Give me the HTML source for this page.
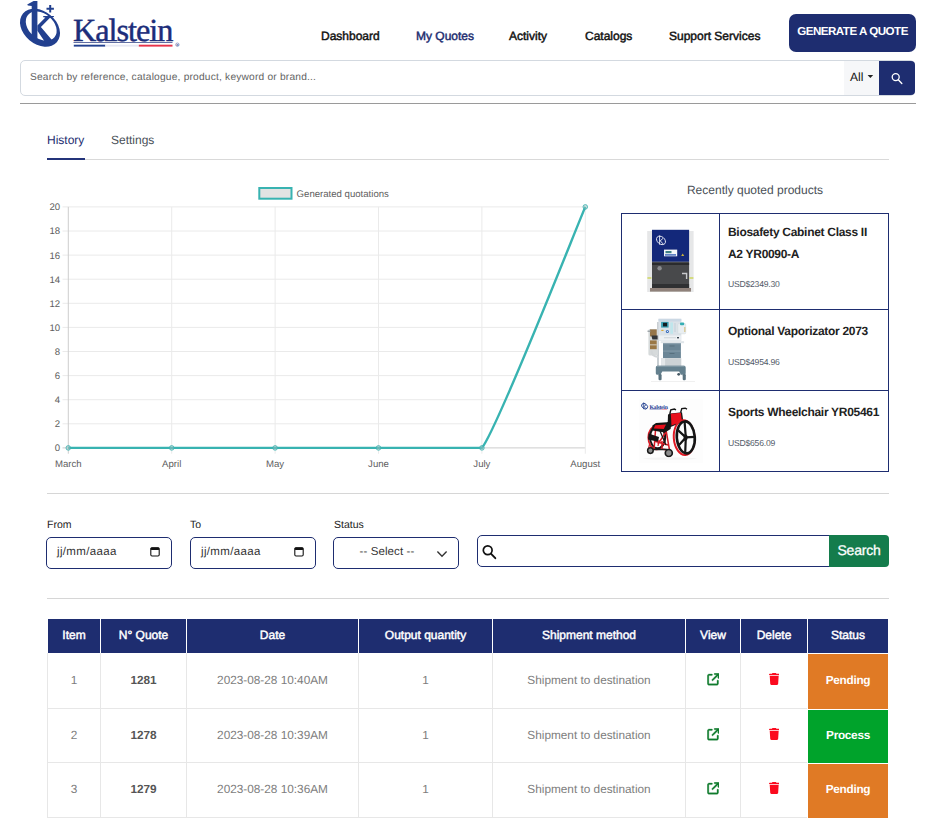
<!DOCTYPE html>
<html lang="en">
<head>
<meta charset="utf-8">
<title>Kalstein - My Quotes</title>
<style>
*{box-sizing:border-box;margin:0;padding:0}
html,body{width:932px;height:818px;overflow:hidden;background:#fff}
body{position:relative;font-family:"Liberation Sans",sans-serif;color:#212529;font-size:12px;text-rendering:geometricPrecision}
.a{position:absolute;white-space:nowrap}
.nav{top:29px;height:14px;line-height:14px;font-size:12px;font-weight:normal;color:#111;letter-spacing:0;-webkit-text-stroke:0.45px currentColor}
.hr{position:absolute;height:1px;background:#d6d6d6}
/* header */
#btn-gen{left:789px;top:14px;width:127px;height:38px;background:#1e2d70;border-radius:7px;color:#fff;font-weight:bold;font-size:11.6px;line-height:35px;text-align:center;letter-spacing:-0.5px}
#sbar{left:20px;top:60px;width:895px;height:36px;border:1px solid #d3d9e0;border-radius:5px;background:#fff}
#sbar .ph{left:9px;top:0;line-height:33px;font-size:10.2px;color:#636363;letter-spacing:0.2px}
#sbar .all{left:823px;top:0;width:36px;height:34px;background:#f6f7f9;font-size:12px;line-height:33px;color:#111;padding-left:6px}
#sbar .go{left:858px;top:0;width:36px;height:34px;background:#1e2d70;border-radius:0 4px 4px 0}
/* tabs */
.tab{top:132px;font-size:12px;line-height:16px}
/* products */
#prod{left:621px;top:213px;width:268px;height:259px;border:1px solid #1e2d70}
#prod .v{position:absolute;left:97px;top:0;width:1px;height:100%;background:#1e2d70}
#prod .h{position:absolute;left:0;width:100%;height:1px;background:#1e2d70}
#prod .n{position:absolute;left:106px;font-weight:bold;font-size:12px;line-height:22px;color:#222;letter-spacing:-0.3px;white-space:nowrap}
#prod .p{position:absolute;left:106px;font-size:8.6px;line-height:10px;color:#525a68;white-space:nowrap;letter-spacing:-0.22px}
/* filters */
.lbl{font-size:10.5px;line-height:12px;color:#222}
.inp{height:32px;border:1px solid #1e2d70;border-radius:5px;background:#fff;font-size:11.5px;line-height:28px;color:#333;letter-spacing:0.35px}
/* table */
#tbl{left:47px;top:618px;width:842px;height:200px}
#tbl .th{position:absolute;top:1px;height:34px;background:#1e2d70;color:#fff;font-weight:normal;-webkit-text-stroke:0.45px #fff;font-size:12px;line-height:33px;text-align:center;border-left:1px solid #fff;letter-spacing:0;white-space:nowrap}
#tbl .td{position:absolute;font-size:11.8px;text-align:center;color:#7d7d7d;border-left:1px solid #e7e7e7;border-bottom:1px solid #e7e7e7;white-space:nowrap}
#tbl .td b{color:#555}
#tbl .st{color:#fff;font-weight:bold;border:1px solid #fff;border-right:0;border-bottom:0;letter-spacing:-0.3px}
#tbl .ic{vertical-align:middle;position:relative;top:-1.6px}
</style>
</head>
<body>

<!-- HEADER -->
<svg id="logo" class="a" style="left:0;top:0" width="200" height="56" viewBox="0 0 200 56">
  <g fill="#22408f">
    <path fill-rule="evenodd" d="M17.8 27.7 a22.2 16.4 0 1 0 44.4 0 a22.2 16.4 0 1 0 -44.4 0 Z M22.6 25.7 a17.3 12.3 0 1 0 34.6 0 a17.3 12.3 0 1 0 -34.6 0 Z" transform="rotate(40 40 27.7)"/>
    <path d="M27.2 4.4 L33.6 1 L37.4 1 L37.4 40 L31.7 37 L31.7 6 L27.9 5.6 Z"/>
    <path d="M37.4 25.6 L45.4 17.6 L43.3 17.2 L43.2 16.1 L53.9 16 L53.9 16.9 L50 17.7 L40.9 27 L53.6 42 L45.8 43.2 L37.4 30.7 Z"/>
    <path d="M49.2 5.1 h2 v2.7 h2.7 v2 h-2.7 v2.7 h-2 v-2.7 h-2.7 v-2 h2.7 Z"/>
  </g>
  <text x="73" y="41.2" font-family="'Liberation Serif',serif" font-size="32.3" letter-spacing="-1.05" fill="#1c2d7a" stroke="#1c2d7a" stroke-width="0.45">Kalstein</text>
  <rect x="73.5" y="42.2" width="99" height="0.8" fill="#3a4a8c"/>
  <rect x="73.8" y="44.7" width="31.5" height="1.9" fill="#22408f"/>
  <rect x="105.3" y="44.7" width="33.5" height="1.9" fill="#e6e8f3"/>
  <rect x="138.8" y="44.7" width="33.7" height="1.9" fill="#e8334a"/>
  <circle cx="177.4" cy="44.7" r="1.7" fill="none" stroke="#44559a" stroke-width="0.5"/>
  <text x="176.45" y="45.7" font-family="'Liberation Sans',sans-serif" font-size="2.8" font-weight="bold" fill="#44559a">R</text>
</svg>
<div class="a nav" style="left:321px">Dashboard</div>
<div class="a nav" style="left:416px;color:#1e2d70">My Quotes</div>
<div class="a nav" style="left:509px">Activity</div>
<div class="a nav" style="left:585px">Catalogs</div>
<div class="a nav" style="left:669px">Support Services</div>
<div id="btn-gen" class="a">GENERATE A QUOTE</div>

<div id="sbar" class="a">
  <div class="a ph">Search by reference, catalogue, product, keyword or brand...</div>
  <div class="a all">All</div>
  <svg class="a" style="left:845.6px;top:13.2px" width="7" height="5" viewBox="0 0 7 5"><path d="M0.6 0.9h5.6L3.4 4z" fill="#222"/></svg>
  <div class="a go"><svg width="36" height="35" viewBox="0 0.6 36 35"><circle cx="16.7" cy="16.7" r="3.5" fill="none" stroke="#fff" stroke-width="1.3"/><path d="M19.3 19.4L22.8 23" stroke="#fff" stroke-width="1.4" stroke-linecap="round"/></svg></div>
</div>
<div class="hr" style="left:20px;top:103px;width:896px;background:#9a9a9a"></div>

<!-- TABS -->
<div class="a tab" style="left:47px;color:#1e2d70">History</div>
<div class="a tab" style="left:111px;color:#495057">Settings</div>
<div class="hr" style="left:47px;top:159px;width:842px;background:#d9d9d9"></div>
<div class="hr" style="left:47px;top:158px;width:38px;height:2px;background:#24347a"></div>

<!-- CHART -->
<svg id="chart" class="a" style="left:40px;top:180px" width="570" height="300" viewBox="40 180 570 300" font-family="'Liberation Sans',sans-serif" font-size="9.6" fill="#606060" text-rendering="geometricPrecision">
<path d="M62.5 206.9H585.3" stroke="#eaeaea" stroke-width="1" fill="none"/>
<path d="M62.5 231.0H585.3" stroke="#eaeaea" stroke-width="1" fill="none"/>
<path d="M62.5 255.1H585.3" stroke="#eaeaea" stroke-width="1" fill="none"/>
<path d="M62.5 279.2H585.3" stroke="#eaeaea" stroke-width="1" fill="none"/>
<path d="M62.5 303.3H585.3" stroke="#eaeaea" stroke-width="1" fill="none"/>
<path d="M62.5 327.4H585.3" stroke="#eaeaea" stroke-width="1" fill="none"/>
<path d="M62.5 351.5H585.3" stroke="#eaeaea" stroke-width="1" fill="none"/>
<path d="M62.5 375.6H585.3" stroke="#eaeaea" stroke-width="1" fill="none"/>
<path d="M62.5 399.7H585.3" stroke="#eaeaea" stroke-width="1" fill="none"/>
<path d="M62.5 423.8H585.3" stroke="#eaeaea" stroke-width="1" fill="none"/>
<path d="M62.5 447.9H585.3" stroke="#cdcdcd" stroke-width="1" fill="none"/>
<path d="M68.3 206.9V453.7" stroke="#cdcdcd" stroke-width="1" fill="none"/>
<path d="M171.7 206.9V453.7" stroke="#eaeaea" stroke-width="1" fill="none"/>
<path d="M275.1 206.9V453.7" stroke="#eaeaea" stroke-width="1" fill="none"/>
<path d="M378.5 206.9V453.7" stroke="#eaeaea" stroke-width="1" fill="none"/>
<path d="M481.9 206.9V453.7" stroke="#eaeaea" stroke-width="1" fill="none"/>
<path d="M585.3 206.9V453.7" stroke="#eaeaea" stroke-width="1" fill="none"/>
<text x="60.2" y="210.3" text-anchor="end">20</text>
<text x="60.2" y="234.4" text-anchor="end">18</text>
<text x="60.2" y="258.5" text-anchor="end">16</text>
<text x="60.2" y="282.6" text-anchor="end">14</text>
<text x="60.2" y="306.7" text-anchor="end">12</text>
<text x="60.2" y="330.8" text-anchor="end">10</text>
<text x="60.2" y="354.9" text-anchor="end">8</text>
<text x="60.2" y="379.0" text-anchor="end">6</text>
<text x="60.2" y="403.1" text-anchor="end">4</text>
<text x="60.2" y="427.2" text-anchor="end">2</text>
<text x="60.2" y="451.3" text-anchor="end">0</text>
<text x="68.3" y="466.7" text-anchor="middle">March</text>
<text x="171.7" y="466.7" text-anchor="middle">April</text>
<text x="275.1" y="466.7" text-anchor="middle">May</text>
<text x="378.5" y="466.7" text-anchor="middle">June</text>
<text x="481.9" y="466.7" text-anchor="middle">July</text>
<text x="585.3" y="466.7" text-anchor="middle">August</text>
<rect x="259.3" y="188" width="32.2" height="10.7" fill="#e3e3e3" stroke="#38b3b1" stroke-width="2"/>
<text x="296.6" y="197">Generated quotations</text>
<path d="M68.3 447.9H481.9C496.7 430.6 575 231.0 585.3 206.9" fill="none" stroke="#38b3b1" stroke-width="2.4" stroke-linejoin="round"/>
<circle cx="68.3" cy="447.9" r="2.3" fill="rgba(150,190,190,0.5)" stroke="#38b3b1" stroke-width="0.8"/>
<circle cx="171.7" cy="447.9" r="2.3" fill="rgba(150,190,190,0.5)" stroke="#38b3b1" stroke-width="0.8"/>
<circle cx="275.1" cy="447.9" r="2.3" fill="rgba(150,190,190,0.5)" stroke="#38b3b1" stroke-width="0.8"/>
<circle cx="378.5" cy="447.9" r="2.3" fill="rgba(150,190,190,0.5)" stroke="#38b3b1" stroke-width="0.8"/>
<circle cx="481.9" cy="447.9" r="2.3" fill="rgba(150,190,190,0.5)" stroke="#38b3b1" stroke-width="0.8"/>
<circle cx="585.3" cy="206.9" r="2.3" fill="rgba(150,190,190,0.5)" stroke="#38b3b1" stroke-width="0.8"/>
</svg>

<!-- PRODUCTS -->
<div class="a" style="left:621px;top:182px;width:268px;text-align:center;font-size:12px;line-height:16px;color:#495057">Recently quoted products</div>
<svg class="a" style="left:622px;top:214px" width="97" height="257" viewBox="622 214 97 257">
  <!-- biosafety cabinet -->
  <rect x="647.2" y="231" width="46.4" height="61" fill="#e6e7e8"/>
  <rect x="652" y="229.8" width="37.1" height="32" fill="#13287a"/>
  <rect x="652" y="261.8" width="37.1" height="26.4" fill="#48494b"/>
  <rect x="652" y="263" width="37.1" height="2" fill="#2a2b2d"/>
  <rect x="652" y="284" width="37.1" height="4" fill="#2f3032"/>
  <rect x="650" y="288" width="41" height="3.6" fill="#8f817a"/>
  <rect x="664" y="249.6" width="13.2" height="6.7" fill="#f4f6f8"/>
  <rect x="665.5" y="251" width="6" height="2.2" fill="#3d7f86"/>
  <rect x="665" y="254.2" width="11" height="1.4" fill="#3b63b8"/>
  <ellipse cx="661" cy="240.4" rx="5" ry="3.6" transform="rotate(40 661 240.4)" fill="none" stroke="#e9ecf6" stroke-width="0.9"/>
  <path d="M659.6 235.5V244.6M660 241l3-2.6M660.4 241l3.2 3.4" stroke="#e9ecf6" stroke-width="0.9" fill="none"/>
  <path d="M682.7 253.4l1.5 2.6h-3z" fill="#c9b23a"/>
  <circle cx="659.6" cy="268.2" r="2.2" fill="#8a8b8e"/>
  <path d="M682 273.5h4.6v5.6" stroke="#c8c9cc" stroke-width="1.4" fill="none"/>
  <rect x="647.4" y="277.4" width="4" height="1.2" fill="#c9d23c"/>
  <rect x="689.4" y="277.4" width="4" height="1.2" fill="#c9d23c"/>
  <!-- anaesthesia machine -->
  <rect x="657" y="322" width="2" height="45" fill="#c9cfd3"/>
  <rect x="658.5" y="318.8" width="22.8" height="22.2" fill="#dbe2e8"/>
  <rect x="658.5" y="318.8" width="22.8" height="2.600" fill="#cbd8e4"/>
  <rect x="661.1" y="321.9" width="7.500" height="5.700" fill="#3aa0b4"/>
  <rect x="663" y="322.800" width="4.100" height="3.600" fill="#141c22"/>
  <rect x="670.3" y="322.400" width="2.700" height="11.400" fill="#bfe6ec"/>
  <rect x="674" y="323" width="2" height="9" fill="#cfd9e0"/>
  <circle cx="667.4" cy="331.400" r="1.500" fill="#2a62b8"/><circle cx="667.400" cy="331.400" r="0.600" fill="#eef3fa"/>
  <rect x="661.3" y="329.800" width="2.200" height="1.200" fill="#d9a93c"/>
  <rect x="677.8" y="323.600" width="7.900" height="10.200" rx="1" fill="#e9eef1" stroke="#cdd6db" stroke-width="0.500"/>
  <rect x="684.2" y="327" width="1.200" height="5" fill="#d8c48a"/>
  <rect x="680" y="322.600" width="4.200" height="2.600" rx="1" fill="#35aeb4"/>
  <rect x="659" y="335.500" width="21.800" height="5" fill="#eef1f3"/>
  <rect x="664" y="337.400" width="12" height="0.800" fill="#c5ccd1"/><rect x="677" y="337" width="2" height="1.400" fill="#3b4650"/>
  <!-- absorber -->
  <rect x="648.4" y="329" width="9.600" height="26.600" rx="1.500" fill="#d6dadb"/>
  <rect x="650" y="329.400" width="6.700" height="7" fill="#96764a"/>
  <rect x="650" y="340.400" width="6.700" height="8.800" fill="#9a7846"/>
  <rect x="650" y="344.400" width="6.700" height="0.900" fill="#d9d6cc"/>
  <path d="M651.4 335.400h6.200v4.200h-5.200z" fill="#33363a"/>
  <path d="M647.500 331.200h3" stroke="#8f979c" stroke-width="1.200"/>
  <path d="M651.500 350.500q0 6 7 6.500" stroke="#d2d6d8" stroke-width="2" fill="none"/>
  <!-- shelf, drawers, column, base -->
  <rect x="660.7" y="341.200" width="23.400" height="2" fill="#dfe5e9"/>
  <rect x="663" y="343.300" width="17.900" height="14.900" fill="#6b8696"/>
  <rect x="663" y="343.300" width="17.900" height="0.900" fill="#8aa0ad"/>
  <rect x="663" y="350.600" width="17.900" height="0.900" fill="#8aa0ad"/>
  <rect x="669.500" y="345.600" width="5" height="0.800" fill="#536b79"/><rect x="669.500" y="353" width="5" height="0.800" fill="#536b79"/>
  <rect x="661.100" y="358.200" width="20.200" height="8.800" fill="#ccd2d5"/>
  <rect x="661.100" y="358.200" width="4" height="8.800" fill="#e3e7e9"/>
  <path d="M655.800 367.400q0-1.600 1.600-1.600h26.700q1.600 0 1.600 1.600v5.800q0 1.500-1.500 1.500h-3.300l-1.800-3.200h-16.800l-1.800 3.200h-3.100q-1.600 0-1.600-1.500z" fill="#64808e"/>
  <rect x="657" y="365.800" width="27.500" height="1.200" fill="#7d95a1"/>
  <rect x="658.500" y="374" width="3.100" height="6.200" rx="1.200" fill="#5a7380"/>
  <rect x="682.700" y="374" width="3.100" height="6.200" rx="1.200" fill="#5a7380"/>
  <circle cx="678.700" cy="374.300" r="1.400" fill="#465964"/>
  <rect x="651" y="381" width="44" height="0.600" fill="#e6e6e6"/>
  <!-- wheelchair -->
  <rect x="639" y="399" width="64" height="64" fill="#fdfdfd"/>
  <ellipse cx="644.6" cy="406.2" rx="3.3" ry="2.4" transform="rotate(40 644.6 406.2)" fill="none" stroke="#22408f" stroke-width="0.9"/>
  <path d="M643.7 402.6v6.6M643.9 406.6l2.200-1.800M644 406.400l2.400 2.600" stroke="#22408f" stroke-width="0.8" fill="none"/>
  <text x="649.4" y="408.800" font-family="'Liberation Serif',serif" font-size="5.800" font-weight="bold" fill="#2a3f96" letter-spacing="-0.300">Kalstein</text>
  <rect x="649.6" y="409.400" width="12" height="0.500" fill="#6a78b4"/><rect x="661.600" y="409.400" width="5.600" height="0.500" fill="#e2566a"/>
  <!-- far wheel -->
  <ellipse cx="656.6" cy="437.6" rx="8.4" ry="11.8" fill="none" stroke="#e01a24" stroke-width="1.600"/>
  <ellipse cx="657.600" cy="437.200" rx="7.600" ry="11" fill="none" stroke="#151515" stroke-width="2"/>
  <!-- frame -->
  <path d="M655.5 430l-1.500 20M666 430l3.500 20M654 441l14 4M662 441v8l6 1M666 432l-8 12" stroke="#d61a24" stroke-width="1.500" fill="none"/>
  <path d="M651.500 449.500h16M660 431l6 14" stroke="#1a1a1a" stroke-width="1.300"/>
  <!-- seat -->
  <path d="M652.400 425.600l3.600-2.600 11-0.800 4.800-1.800-1.200 8.600-5.600 3.400-12.600-1.800z" fill="#151515"/>
  <path d="M655.200 425.200l10.800-0.800-2.200 4.600-10-0.400z" fill="#e8101c"/>
  <!-- backrest -->
  <path d="M668 414.400l2.600-1 11.400-1.200 1.400 9.600-12.200 5-3.600-0.600z" fill="#151515"/>
  <path d="M670.800 413.800l10.100-1.100 1 8.800-10.400 4z" fill="#e8101c"/>
  <path d="M669.800 414l1-4.200 3.600-0.800 1.600 0.800M680.600 412.600l1.200-4 3.400-0.400 1.800 0.900" stroke="#151515" stroke-width="1.400" fill="none"/>
  <!-- footrest -->
  <path d="M648.600 433.600l10.400 3.400-1 4.800-10-2.400z" fill="#151515"/>
  <path d="M650 442l-1.500 7M659 440l-1 6" stroke="#d61a24" stroke-width="1.200"/>
  <!-- near wheel -->
  <ellipse cx="684.2" cy="437.6" rx="10.4" ry="17.400" transform="rotate(-4 684.2 437.6)" fill="none" stroke="#e01a24" stroke-width="2"/>
  <ellipse cx="685.800" cy="437.400" rx="9" ry="16" transform="rotate(-4 685.8 437.4)" fill="#fdfdfd" stroke="#151515" stroke-width="2.600"/>
  <path d="M685.800 437.400l-1.200-15.600M685.800 437.400l9-0.600M685.800 437.400l-0.600 15.600M685.800 437.400l-7.600-7M685.800 437.400l-7.200 8" stroke="#151515" stroke-width="2.200" fill="none"/>
  <ellipse cx="685.6" cy="437.400" rx="2" ry="3" fill="#151515"/>
  <!-- casters -->
  <circle cx="650.4" cy="450.600" r="2.800" fill="#8c8c8c" stroke="#1a1a1a" stroke-width="1.500"/>
  <circle cx="668.800" cy="453" r="3.500" fill="#8c8c8c" stroke="#1a1a1a" stroke-width="1.700"/>
  <ellipse cx="670" cy="458.600" rx="27" ry="1.200" fill="#f4f4f4"/>
</svg>
<div id="prod" class="a">
  <div class="v"></div>
  <div class="h" style="top:95px"></div>
  <div class="h" style="top:176px"></div>
  <div class="n" style="top:7px">Biosafety Cabinet Class II<br>A2 YR0090-A</div>
  <div class="p" style="top:65px">USD$2349.30</div>
  <div class="n" style="top:106px">Optional Vaporizator 2073</div>
  <div class="p" style="top:143px">USD$4954.96</div>
  <div class="n" style="top:187px">Sports Wheelchair YR05461</div>
  <div class="p" style="top:224px">USD$656.09</div>
</div>

<div class="hr" style="left:47px;top:493px;width:842px"></div>

<!-- FILTERS -->
<div class="a lbl" style="left:47px;top:519px">From</div>
<div class="a lbl" style="left:190px;top:519px">To</div>
<div class="a lbl" style="left:334px;top:519px">Status</div>
<div class="a inp" style="left:46px;top:537px;width:126px;padding-left:10px">jj/mm/aaaa<svg class="a" style="left:103px;top:8px" width="10" height="11" viewBox="0 0 10 11"><rect x="0.8" y="1.8" width="8.4" height="8.2" rx="1.2" fill="none" stroke="#111" stroke-width="1.1"/><rect x="0.8" y="1.4" width="8.4" height="2.6" rx="0.8" fill="#111"/></svg></div>
<div class="a inp" style="left:190px;top:537px;width:126px;padding-left:10px">jj/mm/aaaa<svg class="a" style="left:103px;top:8px" width="10" height="11" viewBox="0 0 10 11"><rect x="0.8" y="1.8" width="8.4" height="8.2" rx="1.2" fill="none" stroke="#111" stroke-width="1.1"/><rect x="0.8" y="1.4" width="8.4" height="2.6" rx="0.8" fill="#111"/></svg></div>
<div class="a inp" style="left:333px;top:537px;width:126px;padding-left:25.5px;letter-spacing:0.1px">-- Select --<svg class="a" style="left:102px;top:11.5px" width="12" height="8" viewBox="0 0 12 8"><path d="M1.4 1.6L6 6.2L10.6 1.6" fill="none" stroke="#333" stroke-width="1.4"/></svg></div>
<div class="a inp" style="left:477px;top:535px;width:354px;border-radius:5px 0 0 5px"><svg class="a" style="left:3px;top:7px" width="18" height="18" viewBox="0 0 18 18"><circle cx="6.7" cy="7.2" r="4.4" fill="none" stroke="#111" stroke-width="1.7"/><path d="M9.9 10.6L14.3 15.2" stroke="#111" stroke-width="1.9" stroke-linecap="round"/></svg></div>
<div class="a" style="left:829px;top:535px;width:60px;height:32px;background:#147c4c;border-radius:0 4px 4px 0;color:#fff;font-size:14px;line-height:31px;text-align:center;letter-spacing:-0.2px;-webkit-text-stroke:0.3px #fff">Search</div>

<div class="hr" style="left:47px;top:598px;width:842px"></div>

<!-- TABLE -->
<div id="tbl" class="a">
<div class="th" style="left:0px;width:53px">Item</div>
<div class="th" style="left:53px;width:86px">N° Quote</div>
<div class="th" style="left:139px;width:172px">Date</div>
<div class="th" style="left:311px;width:134px">Output quantity</div>
<div class="th" style="left:445px;width:193px">Shipment method</div>
<div class="th" style="left:638px;width:55px">View</div>
<div class="th" style="left:693px;width:67px">Delete</div>
<div class="th" style="left:760px;width:81px">Status</div>
<div class="td" style="left:0px;top:35px;width:53px;height:56px;line-height:54px">1</div>
<div class="td b" style="left:53px;top:35px;width:86px;height:56px;line-height:54px"><b>1281</b></div>
<div class="td" style="left:139px;top:35px;width:172px;height:56px;line-height:54px">2023-08-28 10:40AM</div>
<div class="td" style="left:311px;top:35px;width:134px;height:56px;line-height:54px">1</div>
<div class="td" style="left:445px;top:35px;width:193px;height:56px;line-height:54px">Shipment to destination</div>
<div class="td" style="left:638px;top:35px;width:55px;height:56px;line-height:54px"><svg class="ic" width="12.6" height="12.6" viewBox="-14 -14 540 540"><path fill="#117c2e" stroke="#117c2e" stroke-width="14" stroke-linejoin="round" d="M320 0c-17.700 0-32 14.300-32 32s14.300 32 32 32h82.700L201.400 265.400c-12.500 12.500-12.500 32.800 0 45.300s32.800 12.500 45.300 0L448 109.300V192c0 17.700 14.300 32 32 32s32-14.300 32-32V32c0-17.700-14.300-32-32-32H320zM80 32C35.800 32 0 67.800 0 112V432c0 44.200 35.800 80 80 80H400c44.200 0 80-35.800 80-80V320c0-17.700-14.300-32-32-32s-32 14.300-32 32V432c0 8.800-7.200 16-16 16H80c-8.800 0-16-7.200-16-16V112c0-8.800 7.200-16 16-16H192c17.700 0 32-14.300 32-32s-14.300-32-32-32H80z"/></svg></div>
<div class="td" style="left:693px;top:35px;width:67px;height:56px;line-height:54px"><svg class="ic" width="10.4" height="11.900" viewBox="0 0 448 512"><path fill="#fb0a1e" d="M135.200 17.700L128 32H32C14.300 32 0 46.300 0 64S14.300 96 32 96H416c17.700 0 32-14.300 32-32s-14.300-32-32-32H320l-7.200-14.300C307.400 6.800 296.300 0 284.200 0H163.800c-12.100 0-23.200 6.800-28.600 17.700zM416 128H32L53.200 467c1.600 25.300 22.600 45 47.900 45H346.900c25.300 0 46.300-19.700 47.900-45L416 128z"/></svg></div>
<div class="td st" style="left:760px;top:35px;width:81px;height:56px;line-height:52px;background:#e07a25">Pending</div>
<div class="td" style="left:0px;top:91px;width:53px;height:54px;line-height:52px">2</div>
<div class="td b" style="left:53px;top:91px;width:86px;height:54px;line-height:52px"><b>1278</b></div>
<div class="td" style="left:139px;top:91px;width:172px;height:54px;line-height:52px">2023-08-28 10:39AM</div>
<div class="td" style="left:311px;top:91px;width:134px;height:54px;line-height:52px">1</div>
<div class="td" style="left:445px;top:91px;width:193px;height:54px;line-height:52px">Shipment to destination</div>
<div class="td" style="left:638px;top:91px;width:55px;height:54px;line-height:52px"><svg class="ic" width="12.6" height="12.6" viewBox="-14 -14 540 540"><path fill="#117c2e" stroke="#117c2e" stroke-width="14" stroke-linejoin="round" d="M320 0c-17.700 0-32 14.300-32 32s14.300 32 32 32h82.700L201.400 265.400c-12.500 12.500-12.500 32.800 0 45.300s32.800 12.500 45.300 0L448 109.300V192c0 17.700 14.300 32 32 32s32-14.300 32-32V32c0-17.700-14.300-32-32-32H320zM80 32C35.800 32 0 67.800 0 112V432c0 44.200 35.800 80 80 80H400c44.200 0 80-35.800 80-80V320c0-17.700-14.300-32-32-32s-32 14.300-32 32V432c0 8.800-7.200 16-16 16H80c-8.800 0-16-7.200-16-16V112c0-8.800 7.200-16 16-16H192c17.700 0 32-14.300 32-32s-14.300-32-32-32H80z"/></svg></div>
<div class="td" style="left:693px;top:91px;width:67px;height:54px;line-height:52px"><svg class="ic" width="10.4" height="11.900" viewBox="0 0 448 512"><path fill="#fb0a1e" d="M135.200 17.700L128 32H32C14.300 32 0 46.300 0 64S14.300 96 32 96H416c17.700 0 32-14.300 32-32s-14.300-32-32-32H320l-7.200-14.300C307.400 6.800 296.300 0 284.200 0H163.800c-12.100 0-23.200 6.800-28.600 17.700zM416 128H32L53.200 467c1.600 25.300 22.600 45 47.900 45H346.900c25.300 0 46.300-19.700 47.900-45L416 128z"/></svg></div>
<div class="td st" style="left:760px;top:91px;width:81px;height:54px;line-height:50px;background:#00a32b">Process</div>
<div class="td" style="left:0px;top:145px;width:53px;height:55px;line-height:53px">3</div>
<div class="td b" style="left:53px;top:145px;width:86px;height:55px;line-height:53px"><b>1279</b></div>
<div class="td" style="left:139px;top:145px;width:172px;height:55px;line-height:53px">2023-08-28 10:36AM</div>
<div class="td" style="left:311px;top:145px;width:134px;height:55px;line-height:53px">1</div>
<div class="td" style="left:445px;top:145px;width:193px;height:55px;line-height:53px">Shipment to destination</div>
<div class="td" style="left:638px;top:145px;width:55px;height:55px;line-height:53px"><svg class="ic" width="12.6" height="12.6" viewBox="-14 -14 540 540"><path fill="#117c2e" stroke="#117c2e" stroke-width="14" stroke-linejoin="round" d="M320 0c-17.700 0-32 14.300-32 32s14.300 32 32 32h82.700L201.400 265.400c-12.500 12.500-12.500 32.800 0 45.300s32.800 12.500 45.300 0L448 109.300V192c0 17.700 14.300 32 32 32s32-14.300 32-32V32c0-17.700-14.300-32-32-32H320zM80 32C35.800 32 0 67.800 0 112V432c0 44.200 35.800 80 80 80H400c44.200 0 80-35.800 80-80V320c0-17.700-14.300-32-32-32s-32 14.300-32 32V432c0 8.800-7.200 16-16 16H80c-8.800 0-16-7.200-16-16V112c0-8.800 7.200-16 16-16H192c17.700 0 32-14.300 32-32s-14.300-32-32-32H80z"/></svg></div>
<div class="td" style="left:693px;top:145px;width:67px;height:55px;line-height:53px"><svg class="ic" width="10.4" height="11.900" viewBox="0 0 448 512"><path fill="#fb0a1e" d="M135.200 17.700L128 32H32C14.300 32 0 46.300 0 64S14.300 96 32 96H416c17.700 0 32-14.300 32-32s-14.300-32-32-32H320l-7.200-14.300C307.400 6.800 296.300 0 284.200 0H163.800c-12.100 0-23.200 6.800-28.600 17.700zM416 128H32L53.200 467c1.600 25.300 22.600 45 47.900 45H346.900c25.300 0 46.300-19.700 47.900-45L416 128z"/></svg></div>
<div class="td st" style="left:760px;top:145px;width:81px;height:55px;line-height:51px;background:#e07a25">Pending</div>
</div>

</body>
</html>
